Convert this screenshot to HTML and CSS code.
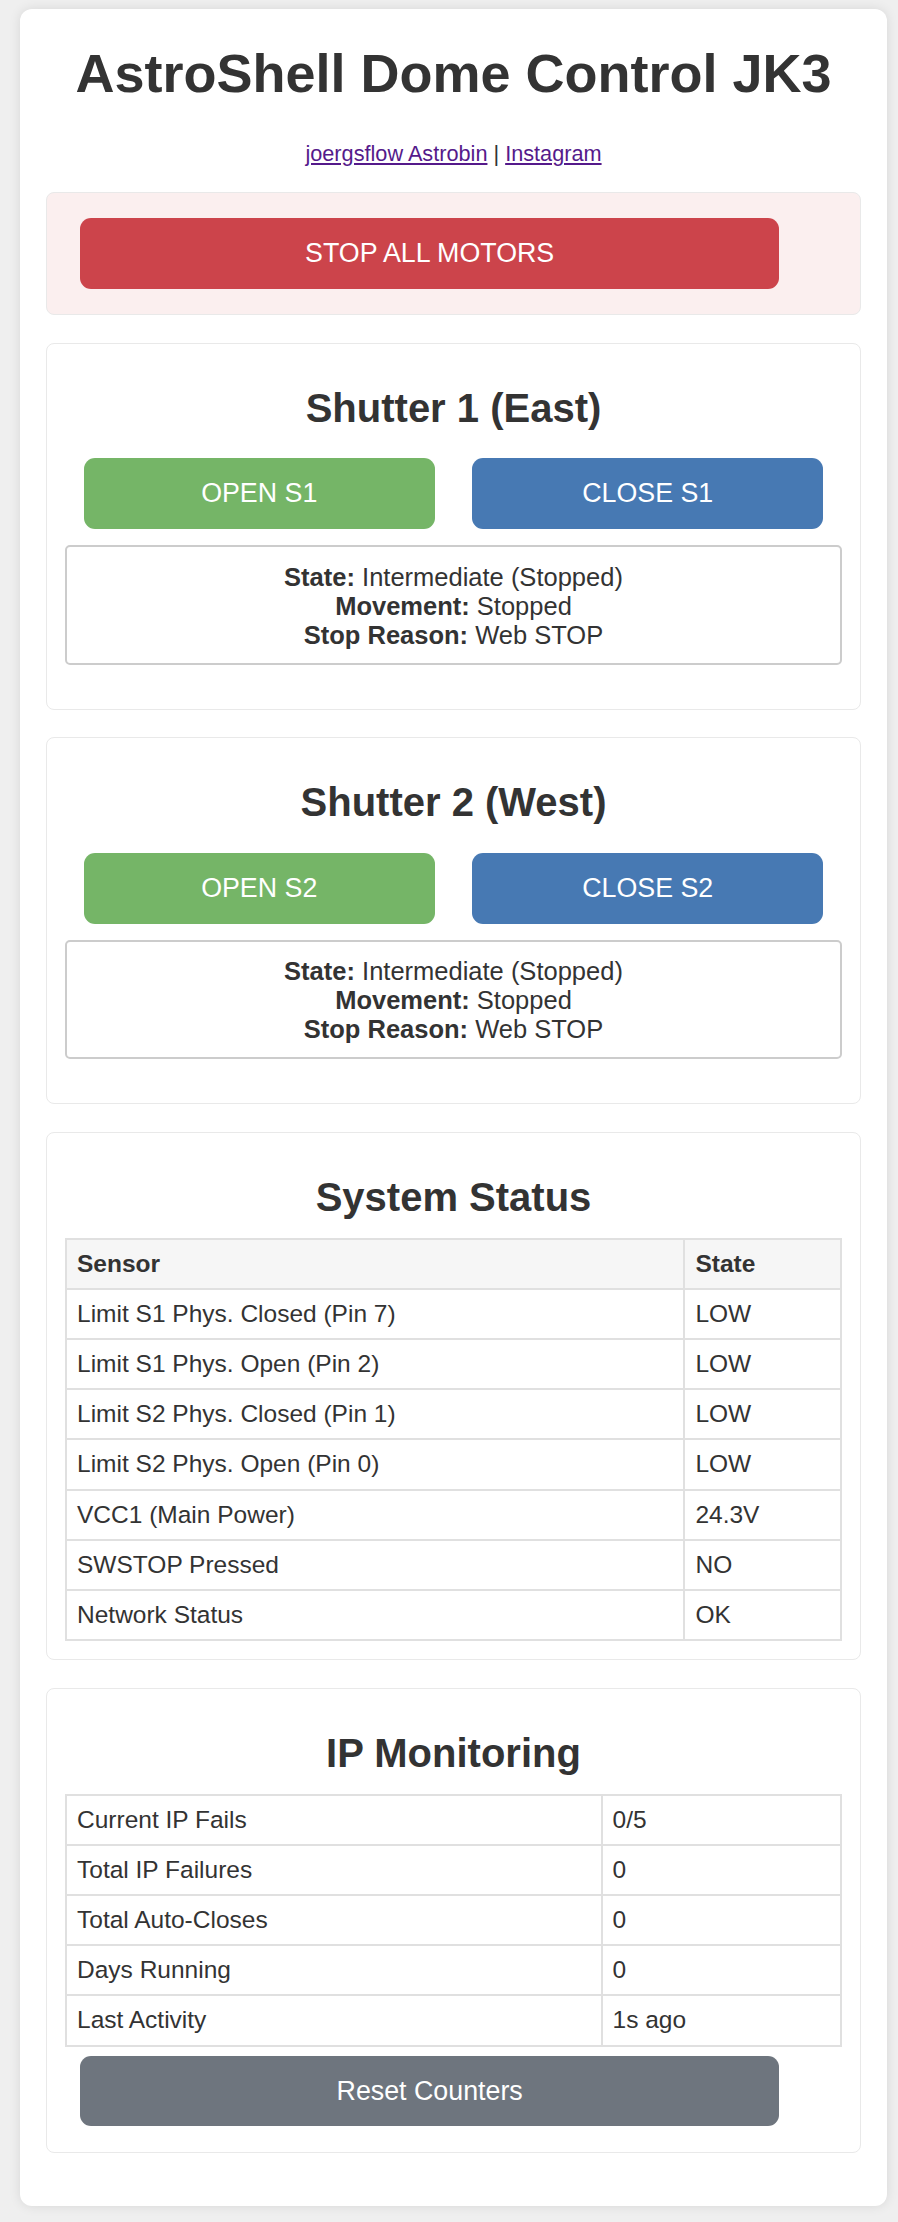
FILE: index.html
```html
<!DOCTYPE html>
<html lang="en">
<head>
<meta charset="utf-8">
<title>AstroShell Dome Control JK3</title>
<link rel="stylesheet" href="styles.css">
</head>
<body>
<div class="container">
  <h1 class="title">AstroShell Dome Control JK3</h1>
  <p class="links"><a href="#" class="link">joergsflow Astrobin</a> | <a href="#" class="link">Instagram</a></p>

  <div class="panel panel-sos">
    <button class="btn btn-wide btn-stop">STOP ALL MOTORS</button>
  </div>

  <div class="panel section">
    <h2 class="section-title">Shutter 1 (East)</h2>
    <div class="btn-row">
      <button class="btn btn-half btn-open">OPEN S1</button>
      <button class="btn btn-half btn-close">CLOSE S1</button>
    </div>
    <div class="status-box">
      <div><b>State:</b> Intermediate (Stopped)</div>
      <div><b>Movement:</b> Stopped</div>
      <div><b>Stop Reason:</b> Web STOP</div>
    </div>
  </div>

  <div class="panel section">
    <h2 class="section-title">Shutter 2 (West)</h2>
    <div class="btn-row">
      <button class="btn btn-half btn-open">OPEN S2</button>
      <button class="btn btn-half btn-close">CLOSE S2</button>
    </div>
    <div class="status-box">
      <div><b>State:</b> Intermediate (Stopped)</div>
      <div><b>Movement:</b> Stopped</div>
      <div><b>Stop Reason:</b> Web STOP</div>
    </div>
  </div>

  <div class="panel section">
    <h2 class="section-title">System Status</h2>
    <table class="data-table sys-table">
      <tr><th>Sensor</th><th>State</th></tr>
      <tr><td>Limit S1 Phys. Closed (Pin 7)</td><td>LOW</td></tr>
      <tr><td>Limit S1 Phys. Open (Pin 2)</td><td>LOW</td></tr>
      <tr><td>Limit S2 Phys. Closed (Pin 1)</td><td>LOW</td></tr>
      <tr><td>Limit S2 Phys. Open (Pin 0)</td><td>LOW</td></tr>
      <tr><td>VCC1 (Main Power)</td><td>24.3V</td></tr>
      <tr><td>SWSTOP Pressed</td><td>NO</td></tr>
      <tr><td>Network Status</td><td>OK</td></tr>
    </table>
  </div>

  <div class="panel section">
    <h2 class="section-title">IP Monitoring</h2>
    <table class="data-table ip-table">
      <tr><td>Current IP Fails</td><td>0/5</td></tr>
      <tr><td>Total IP Failures</td><td>0</td></tr>
      <tr><td>Total Auto-Closes</td><td>0</td></tr>
      <tr><td>Days Running</td><td>0</td></tr>
      <tr><td>Last Activity</td><td>1s ago</td></tr>
    </table>
    <button class="btn btn-wide btn-reset">Reset Counters</button>
  </div>
</div>
</body>
</html>
```

FILE: styles.css
```css
html, body {
  margin: 0;
  padding: 0;
}

body {
  background: #efefef;
  font-family: "Liberation Sans", Arial, Helvetica, sans-serif;
  color: #333;
  padding: 9px 0 15px 20px;
}

.container {
  width: 867px;
  box-sizing: border-box;
  background: #fff;
  border-radius: 12px;
  box-shadow: 0 0 12px rgba(0, 0, 0, 0.10);
  padding: 26px 26px 25px;
}

.title {
  font-size: 54px;
  font-weight: bold;
  line-height: 62px;
  text-align: center;
  margin: 7.1px 0 0;
  color: #333;
}

.links {
  font-size: 21.7px;
  line-height: 25px;
  text-align: center;
  margin: 36.9px 0 25.7px;
  color: #333;
}

.link {
  color: #551a8b;
  text-decoration: underline;
}

.panel {
  border: 1px solid #e9e9e9;
  border-radius: 8px;
  padding: 18px;
  margin-bottom: 27.7px;
}

.panel-sos {
  background: #fbefef;
}

.section {
  background: #fff;
}

.section-title {
  font-size: 40px;
  font-weight: bold;
  line-height: 46px;
  text-align: center;
  margin: 22.85px 0 18.15px;
  color: #333;
}

.btn {
  display: block;
  border: none;
  color: #fff;
  font-family: "Liberation Sans", Arial, Helvetica, sans-serif;
  font-size: 26.8px;
  line-height: 30.8px;
  padding: 20px 0;
  border-radius: 11px;
  text-align: center;
  cursor: pointer;
}

.btn-wide {
  width: 90%;
  margin: 7.3px 15px;
}

.btn-stop {
  background: #cc444b;
}

.btn-reset {
  background: #6e757e;
  margin: 9px 15px 8px;
}

.btn-row {
  display: flex;
  justify-content: space-around;
  padding-top: 9.3px;
}

.btn-half {
  width: 45.2%;
  padding: 20px 0 20.2px;
}

.btn-open {
  background: #75b567;
}

.btn-close {
  background: #4779b3;
}

.status-box {
  border: 2px solid #cccccc;
  border-radius: 5px;
  padding: 15.5px 10px 12.5px;
  margin: 16px 0 26px;
  text-align: center;
  font-size: 25.5px;
  line-height: 29.2px;
  color: #333;
}

.data-table {
  width: 100%;
  border-collapse: collapse;
  border: 2px solid #e0e0e0;
  font-size: 24.5px;
}

.data-table th,
.data-table td {
  border: 2px solid #e0e0e0;
  padding: 10px 10px;
  text-align: left;
  line-height: 28.15px;
  color: #333;
}

.data-table th {
  background: #f6f6f6;
  font-weight: bold;
}

.sys-table td:first-child,
.sys-table th:first-child {
  width: 79.8%;
}

.ip-table td:first-child {
  width: 69.1%;
}
```
